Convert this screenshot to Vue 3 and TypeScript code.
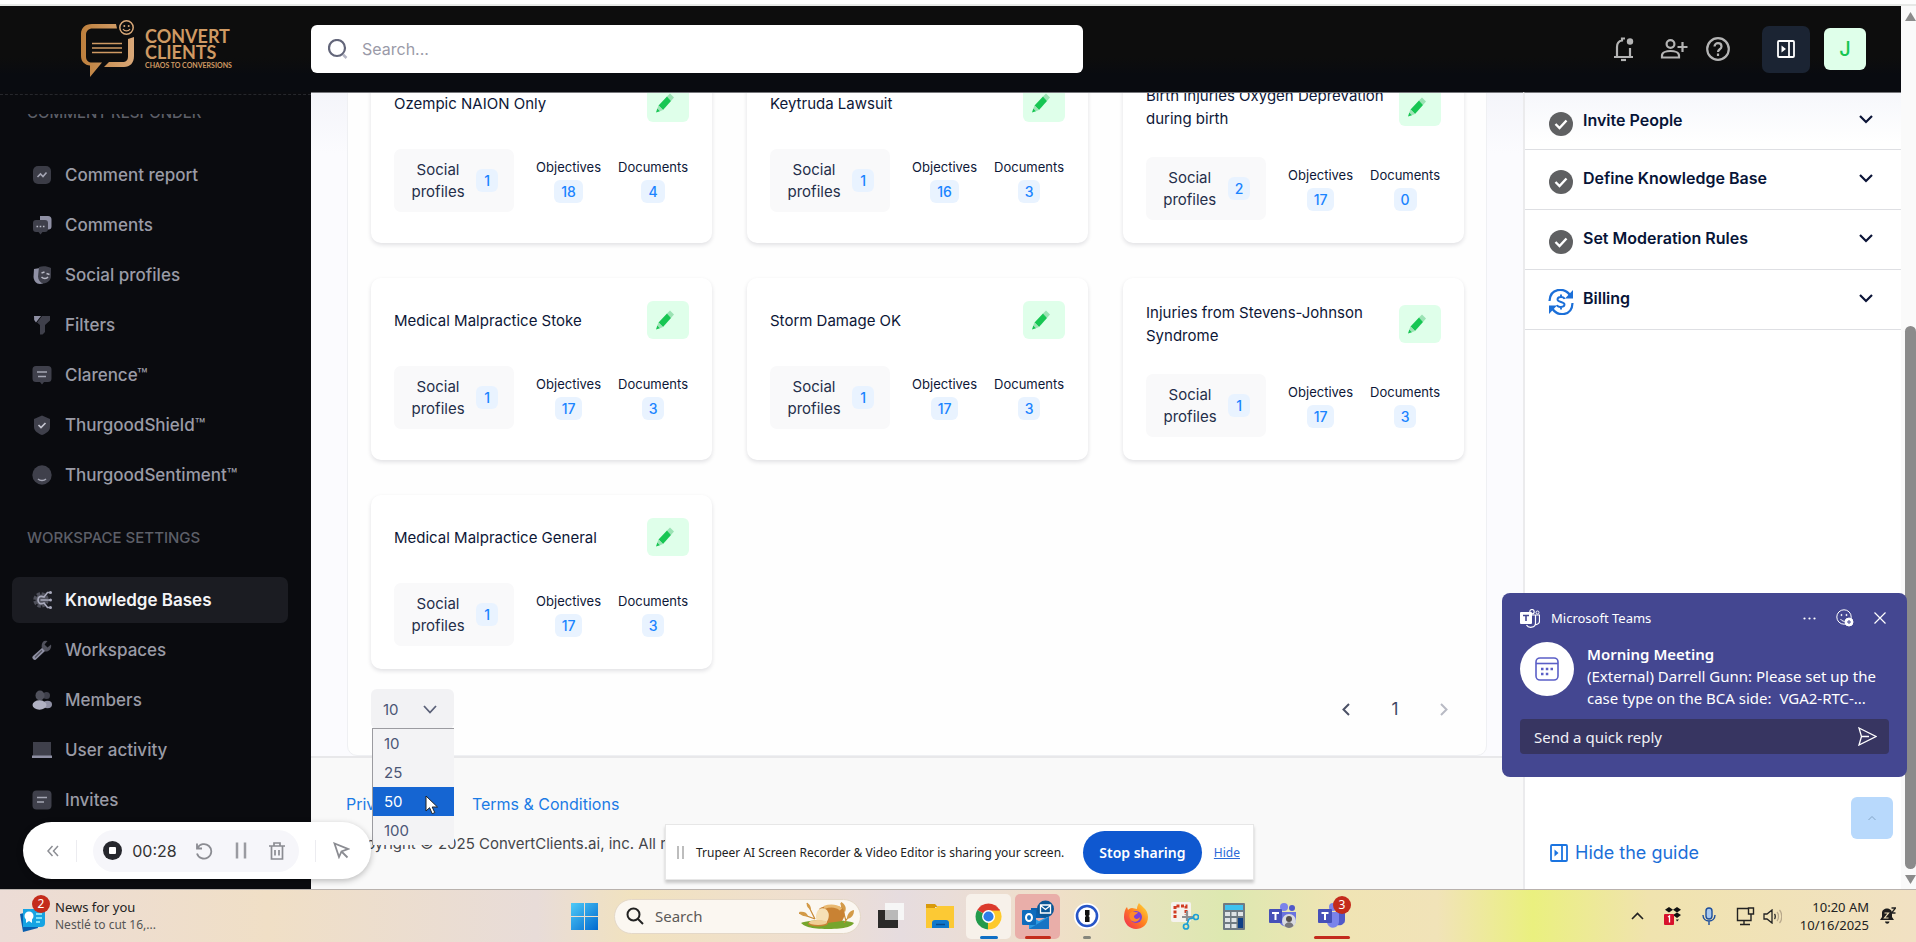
<script setup lang="ts">
import { ref } from 'vue'

interface NavItem { label: string; icon: string; active?: boolean }
interface KnowledgeBase { title: string; profiles: number; objectives: number; documents: number }

const responderItems: NavItem[] = [
  { label: 'Comment report', icon: 'report' },
  { label: 'Comments', icon: 'comments' },
  { label: 'Social profiles', icon: 'masks' },
  { label: 'Filters', icon: 'filter' },
  { label: 'Clarence™', icon: 'chat' },
  { label: 'ThurgoodShield™', icon: 'shield' },
  { label: 'ThurgoodSentiment™', icon: 'smile' },
]
const workspaceItems: NavItem[] = [
  { label: 'Knowledge Bases', icon: 'brain', active: true },
  { label: 'Workspaces', icon: 'wrench' },
  { label: 'Members', icon: 'members' },
  { label: 'User activity', icon: 'laptop' },
  { label: 'Invites', icon: 'note' },
]

const icons: Record<string, string> = {
  report: '<rect x="1" y="1" width="18" height="18" rx="5" fill="#3b3c46"/><path d="M5.5 12l3-3 2.500 2.500 3.500-4" fill="none" stroke="#a5a6b4" stroke-width="1.600"/>',
  comments: '<path d="M8 1h8a3.500 3.500 0 0 1 3.500 3.500v7a3 3 0 0 1-3 3H8z" fill="#8f90a4"/><path d="M4 5h9a3 3 0 0 1 3 3v6a3 3 0 0 1-3 3h-2.500l-2 2.500L6.500 17H4a3 3 0 0 1-3-3V8a3 3 0 0 1 3-3z" fill="#3f404b"/><path d="M4.500 11.500h1.600M7.700 11.500h1.600M10.900 11.500h1.600" stroke="#b9bac6" stroke-width="1.500"/>',
  masks: '<path d="M2 4l6-1 3 15.500-3 .5c-4 0-6-3-6.500-7z" fill="#8f90a4"/><path d="M7 2c4-1.500 8-1 12 1v8c0 4-3 7-8 7.500-3-1-5-4-5-7z" fill="#3f404b"/><path d="M9.500 8l3-1M14.500 8.500l3 1M9.500 12c2 2 5 2 6.500 0" stroke="#b9bac6" stroke-width="1.500" fill="none"/>',
  filter: '<path d="M2 1h7L4 7.500 2.200 5z" fill="#8f90a4"/><path d="M10 1h8v4.500L13 10v7l-2.500 2.500H8V10L5 7.500z" fill="#3f404b"/>',
  chat: '<path d="M4 1h12a3.500 3.500 0 0 1 3.500 3.500v9A3.500 3.500 0 0 1 16 17h-4l-2 2.500L8 17H4a3.500 3.500 0 0 1-3.500-3.500v-9A3.500 3.500 0 0 1 4 1z" fill="#3f404b"/><path d="M5 7h10M6 11.500h8" stroke="#a5a6b4" stroke-width="1.600"/>',
  shield: '<path d="M10 .5l8 3.500v8c0 4-4 6.500-8 8-4-1.500-8-4-8-8V4z" fill="#3f404b"/><path d="M6.500 10l2.500 2.500L13.500 8" stroke="#c3c4cf" stroke-width="1.700" fill="none"/>',
  smile: '<circle cx="10" cy="10" r="9.700" fill="#3f404b"/><path d="M6 14c2 2 6 2 8 0" stroke="#a5a6b4" stroke-width="1.500" fill="none"/>',
  brain: '<circle cx="9" cy="10" r="6" fill="none" stroke="#50515c" stroke-width="3.500" stroke-dasharray="3.200 1.500"/><circle cx="9" cy="10" r="5.500" fill="#50515c"/><path d="M18.500 2.500h-3L12 7c-4-1.500-6 0-6 3s2 4.500 6 3l3.500 4.500h3M8.500 10h10" stroke="#a8a9bb" stroke-width="1.700" fill="none"/><circle cx="18.500" cy="2.500" r="1.500" fill="#a8a9bb"/><circle cx="18.500" cy="10" r="1.500" fill="#a8a9bb"/><circle cx="18.500" cy="17.500" r="1.500" fill="#a8a9bb"/>',
  wrench: '<path d="M12 1a5.500 5.500 0 0 1 3.500 0L12.500 4.500l3 3L19 4.500c1 4-2 7.500-6 7L10 9c-1-4 0-6.500 2-8z" fill="#50515c"/><path d="M10 8l3 3-8.500 8a2.200 2.200 0 0 1-3.500-3z" fill="#8f90a4"/><path d="M3 17.500l7-7" stroke="#50515c" stroke-width="1.200"/>',
  members: '<circle cx="14.500" cy="5.500" r="3.500" fill="#3f404b"/><ellipse cx="8" cy="5.500" rx="4.500" ry="5" fill="#50515c"/><ellipse cx="15.500" cy="14.500" rx="4.500" ry="3.700" fill="#8f90a4"/><ellipse cx="7.500" cy="15" rx="7" ry="4.700" fill="#b0b1c2"/>',
  laptop: '<path d="M1 2h18v14H1z" fill="#3f404b"/><path d="M0 15.500h20V18H0z" fill="#8f90a4"/>',
  note: '<rect x=".500" y=".500" width="19" height="19" rx="4" fill="#3f404b"/><path d="M5 7.500h10M5 12h7" stroke="#a5a6b4" stroke-width="1.600"/>',
}

const bases: KnowledgeBase[] = [
  { title: 'Ozempic NAION Only', profiles: 1, objectives: 18, documents: 4 },
  { title: 'Keytruda Lawsuit', profiles: 1, objectives: 16, documents: 3 },
  { title: 'Birth Injuries Oxygen Deprevation during birth', profiles: 2, objectives: 17, documents: 0 },
  { title: 'Medical Malpractice Stoke', profiles: 1, objectives: 17, documents: 3 },
  { title: 'Storm Damage OK', profiles: 1, objectives: 17, documents: 3 },
  { title: 'Injuries from Stevens-Johnson Syndrome', profiles: 1, objectives: 17, documents: 3 },
  { title: 'Medical Malpractice General', profiles: 1, objectives: 17, documents: 3 },
]

const guideSteps = [
  { label: 'Invite People', done: true },
  { label: 'Define Knowledge Base', done: true },
  { label: 'Set Moderation Rules', done: true },
  { label: 'Billing', done: false },
]

const pageSizes = [10, 25, 50, 100]
const pageSize = ref(10)
const highlighted = ref(50)
const searchText = ref('')
const reply = ref('')
</script>

<template>
  <div class="desktop">
    <div class="top-strip"></div>
    <div class="window">
      <div class="page">
        <header class="topbar">
          <a class="logo" href="#" aria-label="Convert Clients">
            <svg width="56" height="60" viewBox="0 0 56 60" fill="none">
              <defs>
                <linearGradient id="gold" x1="0" x2="1"><stop offset="0" stop-color="#bd7f3c" /><stop offset="1" stop-color="#d9a878" /></linearGradient>
              </defs>
              <path d="M38 5H14C7 5 3 9 3 15v22c0 6 4 9 9 9.500V58l12-14.500H14c-3.500 0-6-2-6-6V16c0-4 2.500-6.500 6.500-6.500H39zM56 18v19c0 7-4 11-10 11H26l5-5h13c4.500 0 6-2 6-6V20z" fill="url(#gold)" />
              <path d="M14 24.500h30M14 29h30M14 33.500h30" stroke="#d09a63" stroke-width="1.500" />
              <circle cx="48.500" cy="8.500" r="6.700" stroke="#d9a878" stroke-width="1.500" />
              <circle cx="46.300" cy="7" r="1" fill="#d9a878" /><circle cx="50.700" cy="7" r="1" fill="#d9a878" />
              <path d="M45 10c1.500 2.500 5.500 2.500 7 0" stroke="#d9a878" stroke-width="1.300" />
            </svg>
            <span class="logo-text">
              <span class="logo-name">CONVERT</span>
              <span class="logo-name">CLIENTS</span>
              <span class="logo-tag">CHAOS TO CONVERSIONS</span>
            </span>
          </a>
          <label class="search">
            <svg width="20" height="20" viewBox="0 0 20 20" fill="none"><circle cx="9" cy="9" r="8" stroke="#63667a" stroke-width="2.200" /><path d="M15 15.500l3.500 3.500" stroke="#b5b6c4" stroke-width="2.500" /></svg>
            <input v-model="searchText" type="search" placeholder="Search..." aria-label="Search" />
          </label>
          <div class="actions">
            <button class="icon-btn" aria-label="Notifications">
              <svg width="22" height="26" viewBox="0 0 22 26" fill="none" stroke="#b4b4b4" stroke-width="2.200"><path d="M1 21h19M4 21V11c0-4 2-6 5-6.500V2.500h3M17 12v9" /><path d="M8 24h5" /><circle cx="17" cy="5.500" r="3.200" fill="#b4b4b4" stroke="none" /></svg>
            </button>
            <button class="icon-btn" aria-label="Add person">
              <svg width="28" height="22" viewBox="0 0 28 22" fill="none" stroke="#b4b4b4" stroke-width="2.200"><circle cx="10.500" cy="6" r="3.900" /><path d="M2 19.500v-2c0-6 17-6 17 0v2zM22.500 4v10M17.500 9h10" /></svg>
            </button>
            <button class="icon-btn" aria-label="Help">
              <svg width="26" height="26" viewBox="0 0 26 26" fill="none" stroke="#b4b4b4" stroke-width="2.200"><circle cx="13" cy="13" r="10.800" /><path d="M9.500 10.500c0-4.500 7-4.500 7 0 0 3-3.500 2.500-3.500 5.500M13 17.500v2.500" /></svg>
            </button>
            <button class="guide-toggle" aria-label="Toggle guide">
              <svg width="18" height="18" viewBox="0 0 18 18" fill="none" stroke="#fff" stroke-width="1.800"><rect x="1" y="1" width="16" height="16" rx="1" /><path d="M12 1v16" /><path d="M4.500 5.500L9 9l-4.500 3.500z" fill="#fff" stroke="none" /></svg>
            </button>
            <button class="avatar">J</button>
          </div>
        </header>

        <div class="body">
          <aside class="sidebar">
            <div class="divider"></div>
            <nav class="nav">
              <h2 class="nav-heading">COMMENT RESPONDER</h2>
              <a v-for="item in responderItems" :key="item.label" href="#" class="nav-item">
                <svg width="20" height="20" viewBox="0 0 20 20" v-html="icons[item.icon]"></svg>{{ item.label }}
              </a>
              <h2 class="nav-heading second">WORKSPACE SETTINGS</h2>
              <a v-for="item in workspaceItems" :key="item.label" href="#" class="nav-item" :class="{ active: item.active }">
                <svg width="20" height="20" viewBox="0 0 20 20" v-html="icons[item.icon]"></svg>{{ item.label }}
              </a>
            </nav>
          </aside>

          <main class="content">
            <section class="panel">
              <div class="grid">
                <article v-for="kb in bases" :key="kb.title" class="card">
                  <div class="card-head">
                    <h3>{{ kb.title }}</h3>
                    <button class="edit" :aria-label="'Edit ' + kb.title">
                      <svg width="20" height="20" viewBox="0 0 20 20"><path d="M12 3.500l3-3 4 4-3 3.500z" fill="#9be3b4" /><path d="M12 3.500l4 4.500-8 9-4.500-4.500z" fill="#17c653" /><path d="M3.500 12.500L8 17l-3 1.200L2.300 15.500z" fill="#9be3b4" /><path d="M2.300 15.500l2.700 2.700L1 19.500z" fill="#17c653" /></svg>
                    </button>
                  </div>
                  <div class="stats">
                    <div class="social"><span>Social profiles</span><b class="badge">{{ kb.profiles }}</b></div>
                    <div class="stat objectives"><span>Objectives</span><b class="badge">{{ kb.objectives }}</b></div>
                    <div class="stat"><span>Documents</span><b class="badge">{{ kb.documents }}</b></div>
                  </div>
                </article>
              </div>
              <div class="pager">
                <div class="size">
                  <select v-model="pageSize" aria-label="Rows per page">
                    <option v-for="n in pageSizes" :key="n" :value="n">{{ n }}</option>
                  </select>
                  <svg width="14" height="9" viewBox="0 0 14 9" fill="none" stroke="#5b6178" stroke-width="1.800"><path d="M1 1l6 6.500L13 1" /></svg>
                  <ul class="options" role="listbox" aria-label="Rows per page options">
                    <li v-for="n in pageSizes" :key="n" role="option" :class="{ on: n === highlighted }" @mouseenter="highlighted = n">{{ n }}</li>
                  </ul>
                  <svg class="cursor" width="14" height="20" viewBox="0 0 14 20"><path d="M1 1v15l3.600-3.300 2.600 6 2.600-1.100L7.200 12H12.500z" fill="#fff" stroke="#222" stroke-width="1" /></svg>
                </div>
                <div class="pages">
                  <button aria-label="Previous page"><svg width="8" height="13" viewBox="0 0 8 13" fill="none" stroke="#4b5166" stroke-width="2"><path d="M7 1L1.500 6.500 7 12" /></svg></button>
                  <button class="number">1</button>
                  <button aria-label="Next page" disabled><svg width="8" height="13" viewBox="0 0 8 13" fill="none" stroke="#b8bac4" stroke-width="2"><path d="M1 1l5.500 5.500L1 12" /></svg></button>
                </div>
              </div>
            </section>
            <footer class="footer">
              <div class="links"><a href="#">Privacy Policy</a><a href="#">Terms &amp; Conditions</a></div>
              <p>Copyright © 2025 ConvertClients.ai, inc. All rights reserved.</p>
            </footer>
          </main>

          <aside class="guide">
            <button v-for="step in guideSteps" :key="step.label" class="step">
              <svg v-if="step.done" width="24" height="24" viewBox="0 0 24 24"><circle cx="12" cy="12" r="12" fill="#5f6062" /><path d="M6.500 12l4 4 7-7.500" fill="none" stroke="#fff" stroke-width="2.400" /></svg>
              <svg v-else width="26" height="26" viewBox="0 0 26 26" fill="none" stroke="#1b6fd8" stroke-width="2.200"><path d="M1.500 12C2 -1 16-2 22 6M24.500 14c-.5 13-14 14-20 6" /><path d="M25 1v8.500h-8zM1 25v-8.500h8z" fill="#1b6fd8" stroke="none" /><path d="M16.500 10c-1-3-7-2.500-7 .5s7 2 7 5-6.500 3.500-7.500.5M13 5.500v2.500M13 18v2.500" stroke-width="1.900" /></svg>
              <span>{{ step.label }}</span>
              <svg width="14" height="9" viewBox="0 0 14 9" fill="none" stroke="#0b1437" stroke-width="2.200"><path d="M1 1l6 6 6-6" /></svg>
            </button>
            <button class="to-top" aria-label="Scroll to top"><svg width="8" height="7" viewBox="0 0 8 7" fill="none" stroke="#84a5c6"><path d="M0.500 5L4 1.500 7.500 5" /></svg></button>
            <a class="hide-guide" href="#">
              <svg width="18" height="18" viewBox="0 0 18 18" fill="none" stroke="#1b74e0" stroke-width="1.800"><rect x="1" y="1" width="16" height="16" rx="1" /><path d="M12 1v16" /><path d="M4.500 5.500L8.500 9l-4 3.500z" fill="#1b74e0" stroke="none" /></svg>
              Hide the guide
            </a>
          </aside>
        </div>
      </div>
      <div class="scrollbar">
        <svg width="11" height="9" viewBox="0 0 11 9"><path d="M5.500 0L11 9H0z" fill="#8b8b8b" /></svg>
        <div class="track"><div class="thumb"></div></div>
        <svg width="11" height="9" viewBox="0 0 11 9"><path d="M0 0h11L5.500 9z" fill="#8b8b8b" /></svg>
      </div>
    </div>

    <div class="recorder">
      <button aria-label="Collapse"><svg width="12" height="12" viewBox="0 0 12 12" fill="none" stroke="#8c8e94" stroke-width="1.500"><path d="M5.500 1L1 6l4.500 5M11 1L6.500 6l4.500 5" /></svg></button>
      <i class="bar"></i>
      <div class="controls">
        <button aria-label="Stop"><svg width="19" height="19" viewBox="0 0 19 19"><circle cx="9.500" cy="9.500" r="9.500" fill="#26272d" /><rect x="6" y="6" width="7" height="7" rx="1" fill="#fff" /></svg></button>
        <span class="time">00:28</span>
        <button aria-label="Restart"><svg width="18" height="18" viewBox="0 0 18 18" fill="none" stroke="#8b8c92" stroke-width="1.800"><path d="M2 1.500v5h5M2.500 6a7.300 7.300 0 1 1-.5 5.500" /></svg></button>
        <button aria-label="Pause"><svg width="12" height="17" viewBox="0 0 12 17" stroke="#9a9ba1" stroke-width="2.500"><path d="M2 .500v16M10 .500v16" /></svg></button>
        <button aria-label="Delete"><svg width="16" height="18" viewBox="0 0 16 18" fill="none" stroke="#8b8c92" stroke-width="1.700"><path d="M0 4h16M5 3.500V1h6v2.500M2.500 4v13h11V4M6 8v5.500M10 8v5.500" /></svg></button>
      </div>
      <i class="bar"></i>
      <button aria-label="Pointer"><svg width="17" height="17" viewBox="0 0 17 17" fill="none" stroke="#8b8c92" stroke-width="1.800"><path d="M1.500 1.500L6 15l2.500-5.500L15 7zM9 10l5.500 5.500" /></svg></button>
    </div>

    <div class="sharing">
      <svg width="8" height="13" viewBox="0 0 8 13" stroke="#bdbdbd" stroke-width="2"><path d="M1 0v13M6 0v13" /></svg>
      <span>Trupeer AI Screen Recorder &amp; Video Editor is sharing your screen.</span>
      <button>Stop sharing</button>
      <a href="#">Hide</a>
    </div>

    <section class="toast">
      <header>
        <svg width="20" height="19" viewBox="0 0 20 19"><path d="M11 6h8.500v6a3.500 3.500 0 0 1-4 3.500M15.500 6v8c0 5-7 5.500-9 2" fill="none" stroke="#fff" stroke-width="1.200" /><circle cx="12" cy="2.700" r="2.200" fill="none" stroke="#fff" stroke-width="1.200" /><circle cx="17.500" cy="3.500" r="1.500" fill="none" stroke="#fff" /><rect y="3" width="12" height="12" rx="1" fill="#fff" /><path d="M3 6.500h6M6 6.500V12" stroke="#444791" stroke-width="1.600" /></svg>
        <span class="app-name">Microsoft Teams</span>
        <button aria-label="More"><svg width="13" height="3" viewBox="0 0 13 3" fill="#fff"><circle cx="1.500" cy="1.500" r="1.100" /><circle cx="6.500" cy="1.500" r="1.100" /><circle cx="11.500" cy="1.500" r="1.100" /></svg></button>
        <button aria-label="React"><svg width="18" height="18" viewBox="0 0 18 18" fill="none" stroke="#fff"><circle cx="8" cy="8" r="7.200" /><circle cx="5.500" cy="6" r=".6" fill="#fff" /><circle cx="10.500" cy="6" r=".6" fill="#fff" /><path d="M4.500 10c1.500 2.500 4 2.500 5 2" /><circle cx="13" cy="13" r="4" fill="#fff" /><path d="M13 11v4M11 13h4" stroke="#444791" /></svg></button>
        <button aria-label="Close"><svg width="12" height="12" viewBox="0 0 12 12" stroke="#fff" stroke-width="1.200"><path d="M.500.500l11 11M11.500.500l-11 11" /></svg></button>
      </header>
      <div class="toast-body">
        <div class="toast-icon"><svg width="24" height="24" viewBox="0 0 24 24" fill="none" stroke="#5b5fc7" stroke-width="1.600"><rect x="1" y="1" width="22" height="22" rx="4" /><path d="M1 6.500h22" /><path d="M6 12h2.500M10.800 12h2.500M15.500 12H18M6 17h2.500M10.800 17h2.500" stroke-width="2.600" /></svg></div>
        <div class="toast-text">
          <strong>Morning Meeting</strong>
          <p>(External) Darrell Gunn: Please set up the<br />case type on the BCA side:&nbsp; VGA2-RTC-...</p>
        </div>
      </div>
      <div class="reply">
        <input v-model="reply" type="text" placeholder="Send a quick reply" aria-label="Send a quick reply" />
        <button aria-label="Send"><svg width="19" height="19" viewBox="0 0 19 19" fill="none" stroke="#fff" stroke-width="1.300"><path d="M1 1l17 8.500L1 18l2.500-8.500zM3.500 9.500H11" /></svg></button>
      </div>
    </section>

    <div class="taskbar">
      <div class="tb-left">
        <button class="news">
          <span class="news-icon">
            <svg width="26" height="26" viewBox="0 0 26 26"><path d="M0 8l15-4 3 18-15 4z" fill="#0a5fae" /><path d="M3 3h22v14a4 4 0 0 1-4 4H3z" fill="#17a4e3" /><circle cx="9" cy="10" r="4.500" fill="#fff" /><path d="M6 10h6v7l-3-2-3 2z" fill="#fff" /><path d="M16 8h6M16 12h6M16 16h4" stroke="#7fe0f7" stroke-width="1.800" /></svg>
            <b class="count">2</b>
          </span>
          <span class="news-text"><span>News for you</span><small>Nestlé to cut 16,...</small></span>
        </button>
      </div>
      <div class="tb-center">
        <button class="app" aria-label="Start">
          <svg width="27" height="27" viewBox="0 0 27 27"><defs><linearGradient id="win" x1="0" y1="0" x2="1" y2="1"><stop offset="0" stop-color="#4ecbf8" /><stop offset="1" stop-color="#0269cf" /></linearGradient></defs><path d="M0 0h13v13H0zM14 0h13v13H14zM0 14h13v13H0zM14 14h13v13H14z" fill="url(#win)" /></svg>
        </button>
        <label class="tb-search">
          <svg width="18" height="18" viewBox="0 0 18 18" fill="none" stroke="#222" stroke-width="2"><circle cx="7.500" cy="7.500" r="6" /><path d="M12 12l5 5" /></svg>
          <input type="search" placeholder="Search" aria-label="Search the computer" />
          <svg width="56" height="28" viewBox="0 0 56 28"><path d="M2 21c8-4 46-4 53 0-2 3-8 6-26 6S5 24 2 21z" fill="#76a52c" /><path d="M8 1l8 16M0 11l16 6M42 1l5 18M54 9l-9 12" stroke="#c88a35" stroke-width="1.200" fill="none" /><path d="M8 1c3 1 4 4 4 7-3-2-5-4-4-7zM0 10c4-1 8 0 9 4-4 1-7 0-9-4zM42 0c4 2 6 6 4 10-3-2-5-6-4-10zM55 8c0 5-2 8-7 9 0-4 2-8 7-9z" fill="#d39a48" /><path d="M20 7C24 3 40 2 44 7c3 4 1 9-1 12l-22 3z" fill="#c98233" /><path d="M25 5.500c7-2.500 14-1.500 17 2" stroke="#e9b972" stroke-width="3" fill="none" /><path d="M18 10c2-5 9-5 11 0 2 3 0 9-2 11l-8 1c-2-4-3-8-1-12z" fill="#f6e0b6" /><ellipse cx="19" cy="21.500" rx="10" ry="3" fill="#c98233" /><ellipse cx="19" cy="20.500" rx="9" ry="2.400" fill="#f1cf96" /></svg>
        </label>
        <button class="app" aria-label="Task view"><svg width="28" height="28" viewBox="0 0 28 28"><rect x="1" y="8" width="20" height="18" fill="#2b2a29" /><rect x="8" y="1" width="19" height="17" fill="#f6f6f6" /><rect x="8" y="8" width="13" height="10" fill="#b9b9b9" /></svg></button>
        <button class="app" aria-label="Files"><svg width="28" height="26" viewBox="0 0 28 26"><path d="M0 1h9l3 3h-3v6H0z" fill="#d99a0b" /><path d="M0 5h10l2-2h16v22H0z" fill="#fcc934" /><path d="M6 25v-5a3 3 0 0 1 3-3h11a3 3 0 0 1 3 3v5z" fill="#1078cb" /><path d="M10 21.500h9" stroke="#0a4c8c" stroke-width="1.500" /></svg></button>
        <button class="app chrome" aria-label="Chrome"><svg width="27" height="27" viewBox="0 0 48 48"><circle cx="24" cy="24" r="23" fill="#fff" /><path d="M24 24L4 12.500A23 23 0 0 1 44 12.500z" fill="#db3a2c" /><path d="M24 24L4 12.500A23 23 0 0 0 23 47z" fill="#229a4b" /><path d="M24 24h-1v23a23 23 0 0 0 21-34.500H24z" fill="#fdc92b" /><path d="M24 12.500h20" stroke="#db3a2c" stroke-width="2" /><circle cx="24" cy="24" r="11.500" fill="#fff" /><circle cx="24" cy="24" r="9" fill="#2d7de8" /></svg><i class="run blue"></i></button>
        <button class="app outlook" aria-label="Outlook"><svg width="32" height="32" viewBox="0 0 32 32"><path d="M9 8h15v10H9z" fill="#0b5fad" /><path d="M7 16l10 5 10-5v13H7z" fill="#2b9ae3" /><path d="M7 29l20-12v12z" fill="#1674c4" /><rect y="10" width="14" height="15" rx="1" fill="#0f6cbd" /><ellipse cx="7" cy="17.500" rx="3" ry="3.500" fill="none" stroke="#fff" stroke-width="2" /><circle cx="23.500" cy="9" r="8.500" fill="#0c5796" /><path d="M18.500 5h10v8h-10zM18.500 5.500l5 4 5-4" fill="none" stroke="#fff" stroke-width="1.300" /></svg><i class="run red"></i></button>
        <button class="app" aria-label="1Password"><svg width="26" height="26" viewBox="0 0 26 26"><circle cx="13" cy="13" r="13" fill="#fff" /><circle cx="13" cy="13" r="10" fill="none" stroke="#2655c7" stroke-width="2.600" /><path d="M11 7h4.500v5l-1 1 1 1v5H11v-5l1-1-1-1z" fill="#111" /></svg><i class="run dot"></i></button>
        <button class="app" aria-label="Firefox"><svg width="26" height="26" viewBox="0 0 26 26"><defs><linearGradient id="fox" x1="1" y1="0" x2="0" y2="1"><stop offset="0" stop-color="#ffe13a" /><stop offset=".5" stop-color="#ff7d1f" /><stop offset="1" stop-color="#f0245a" /></linearGradient></defs><path d="M16 0c2 3 9 6 9 14S19 26 13 26 1 21 1 14c0-4 1-8 3-10l1 3c1-1 2-2 4-2l5 1c0-3 1-4 2-6z" fill="url(#fox)" /><circle cx="13" cy="14" r="6" fill="#7b3fd8" /><path d="M7 10c3-3 5 0 8-1-1 3-4 2-4 5 1 3 5 2 6 0 0 4-5 6-8 4s-3-6-2-8z" fill="#ff8a2a" /></svg></button>
        <button class="app" aria-label="Snipping tool"><svg width="28" height="28" viewBox="0 0 28 28" fill="none"><rect width="20" height="20" rx="2" fill="#f5f2ee" /><path d="M4 16V4h11v9" stroke="#d13b22" stroke-width="3" stroke-dasharray="3 1.500" /><path d="M16 9v10M11 15h11" stroke="#8d8f92" stroke-width="2.200" /><circle cx="25" cy="15" r="2.500" stroke="#1b9fd6" stroke-width="1.700" /><circle cx="15" cy="24.500" r="2.500" stroke="#1b9fd6" stroke-width="1.700" /><path d="M16 22l2-5 4-1" stroke="#1b9fd6" stroke-width="1.700" /></svg></button>
        <button class="app" aria-label="Calculator"><svg width="22" height="27" viewBox="0 0 22 27"><rect width="22" height="27" rx="1" fill="#6f7a82" /><rect x="2" y="2" width="18" height="5" fill="#3ec3f0" /><path d="M2 9h5v4H2zM8.500 9h5v4h-5zM15 9h5v4h-5zM2 15h5v4H2zM8.500 15h5v4h-5zM2 21h5v4H2zM8.500 21h5v4h-5z" fill="#dfe3e6" /><path d="M15 15h5v10h-5z" fill="#0e3f86" /></svg></button>
        <button class="app" aria-label="Teams chat"><svg width="28" height="26" viewBox="0 0 28 26"><circle cx="15" cy="4" r="4" fill="#7b83eb" /><circle cx="23" cy="5" r="3" fill="#5059c9" /><path d="M10 9h17v8c0 9-17 9-17 0z" fill="#6a73de" /><rect y="6" width="13" height="14" rx="1" fill="#4650b8" /><path d="M3 10h7M6.500 10v7" stroke="#fff" stroke-width="2" /><circle cx="20" cy="18" r="7" fill="#d9dbe0" /><circle cx="20" cy="16" r="3" fill="#55504d" /><path d="M15.500 23c1-5 8-5 9 0-3 2.500-6 2.500-9 0z" fill="#77777c" /></svg></button>
        <button class="app" aria-label="Teams"><svg width="28" height="26" viewBox="0 0 28 26"><circle cx="15" cy="4" r="4" fill="#7b83eb" /><path d="M18 9h9v8c0 4-4 6-8 5z" fill="#5059c9" /><path d="M9 9h12v9c0 8-10 9-12 2z" fill="#7b83eb" /><rect y="6" width="14" height="14" rx="1" fill="#4650b8" /><path d="M3.500 10h7M7 10v7" stroke="#fff" stroke-width="2" /></svg><b class="count">3</b><i class="run red wide"></i></button>
      </div>
      <div class="tb-right">
        <button aria-label="Show hidden icons"><svg width="13" height="8" viewBox="0 0 13 8" fill="none" stroke="#222" stroke-width="1.600"><path d="M1 7l5.500-5.500L12 7" /></svg></button>
        <button aria-label="Dropbox"><svg width="18" height="18" viewBox="0 0 18 18"><path d="M5 0l4 2.700L5 5.500 1 2.700zM13 0l4 2.700-4 2.800-4-2.800zM13 5.500L17 8l-4 3-4-3zM12 12.500h3l-2 2z" fill="#111" /><rect y="7" width="10" height="11" rx="1" fill="#d8122c" /><path d="M4 10l1.500-1v6.500" stroke="#fff" stroke-width="1.300" fill="none" /></svg></button>
        <button aria-label="Microphone"><svg width="14" height="18" viewBox="0 0 14 18" fill="none" stroke="#1d4e9c" stroke-width="1.400"><rect x="4" y="1" width="6" height="11" rx="3" fill="#a9c9ee" /><path d="M1 8c0 8 12 8 12 0M7 14v4" /></svg></button>
        <span class="net">
          <svg width="19" height="19" viewBox="0 0 19 19" fill="none" stroke="#222" stroke-width="1.400"><path d="M12 1.500H1.500v12H15V9M4 17.500h10M8 14v3M12.500 1h5v6h-5zM15 7v3" /></svg>
          <svg width="19" height="15" viewBox="0 0 19 15" fill="none" stroke="#222" stroke-width="1.300"><path d="M1 5h3l5-4v13l-5-4H1zM11.500 5c1 1 1 4 0 5" /><path d="M14 3c2 2 2 7 0 9M16.500 1c3 3 3 10 0 13" stroke="#b9a98c" /></svg>
        </span>
        <div class="clock"><span>10:20 AM</span><span>10/16/2025</span></div>
        <svg width="17" height="18" viewBox="0 0 17 18"><path d="M1 13l2-3V6c0-6 10-6 10 0v4l2 3zM6 14.500h4.500c-.5 3-4 3-4.500 0z" fill="#1d1d1d" /><path d="M5.500 6h4l-4 5h4" stroke="#f0e0bc" stroke-width="1.200" fill="none" /><path d="M12.500 1h4l-4 5h4" stroke="#222" stroke-width="1.300" fill="none" /></svg>
      </div>
    </div>
  </div>
</template>

<style>
html, body { margin: 0; height: 100%; }
#app { height: 100%; }
</style>

<style scoped>
* { box-sizing: border-box; }
.desktop { position: relative; display: flex; flex-direction: column; height: 100vh; overflow: hidden; font-family: Inter, "Liberation Sans", sans-serif; font-size: 16px; color: #0d1737; background: #fff; }
button { font: inherit; color: inherit; background: none; border: 0; padding: 0; display: flex; align-items: center; justify-content: center; }
input, select { font: inherit; color: inherit; border: 0; background: none; outline: none; padding: 0; min-width: 0; appearance: none; }
a { text-decoration: none; }
h2, h3, p, ul { margin: 0; padding: 0; font-weight: 400; list-style: none; }
svg { flex: none; display: block; }

.top-strip { flex: none; height: 6px; background: #fdfdfd; border-bottom: 2px solid #e6e8e6; }
.window { flex: 1; min-height: 0; display: flex; }
.page { flex: 1; min-width: 0; display: flex; flex-direction: column; }
.topbar { flex: none; height: 86px; display: flex; align-items: center; background: linear-gradient(#0d0d0d 60%, #090b10 80%); }
.logo { width: 311px; padding-left: 78px; display: flex; gap: 11px; align-items: center; }
.logo-text { display: flex; flex-direction: column; font-family: Lato, sans-serif; color: #cf9a63; }
.logo-name { font-size: 18px; line-height: 16px; font-weight: 700; }
.logo-tag { font-size: 7px; line-height: 10px; font-weight: 700; white-space: nowrap; }
.search { width: 772px; height: 48px; border-radius: 6px; background: #fff; display: flex; align-items: center; gap: 14px; padding: 0 17px; }
.search input { flex: 1; color: #333; }
.search input::placeholder { color: #9a9aa8; opacity: 1; }
.actions { margin-left: auto; display: flex; align-items: center; padding-right: 35px; }
.icon-btn { width: 44px; height: 40px; }
.icon-btn:first-child { width: 57px; }
.guide-toggle { width: 48px; height: 47px; margin-left: 22px; background: #1b2433; border-radius: 7px; }
.avatar { width: 42px; height: 42px; margin-left: 14px; background: #dfffea; border-radius: 6px; color: #17c653; font-size: 20px; font-weight: 500; }

.body { flex: 1; min-height: 0; display: flex; position: relative; }
.sidebar { flex: none; width: 311px; background: #0a0b0f; display: flex; flex-direction: column; padding-top: 2px; }
.divider { flex: none; height: 20px; border-top: 1px dashed #26272c; }
.nav { flex: 1; min-height: 0; overflow: hidden; display: flex; flex-direction: column; justify-content: flex-end; padding: 0 23px 64px 12px; }
.nav-heading { flex: none; height: 26px; line-height: 26px; padding-left: 15px; margin-bottom: 24px; font-size: 15px; font-weight: 500; color: #5d5f68; }
.nav-heading.second { margin-top: 25px; }
.nav-item { flex: none; height: 46px; margin: 2px 0; display: flex; align-items: center; gap: 13px; padding-left: 20px; border-radius: 7px; color: #9a9ba6; font-size: 17px; font-weight: 500; white-space: nowrap; }
.nav-item.active { background: #1b1c22; color: #f5f5f7; font-weight: 600; }

.content { flex: 1; min-width: 0; overflow: hidden; display: flex; flex-direction: column; justify-content: flex-end; background: linear-gradient(#f4f5fa, #fbfbfe 60px); border-top: 1px solid #77787c; }
.panel { flex: none; margin: 0 36px; background: #fefefe; border: 1px solid #eff0f3; border-radius: 10px; padding: 22px 22px 26px 23px; }
.grid { display: grid; grid-template-columns: repeat(3, 1fr); gap: 35px; }
.card { display: flex; flex-direction: column; gap: 27px; background: #fff; border-radius: 10px; padding: 23px; box-shadow: 0 2px 4px rgba(20, 25, 50, .13); }
.card-head { display: flex; align-items: center; justify-content: space-between; }
.card-head h3 { font-size: 15px; line-height: 23px; }
.edit { flex: none; width: 42px; height: 38px; background: #dfffea; border-radius: 6px; padding-right: 6px; }
.stats { display: flex; align-items: center; }
.social { flex: 1; height: 63px; display: flex; align-items: center; justify-content: center; gap: 10px; border-radius: 7px; background: #f9f9fa; color: #252f4a; line-height: 22px; text-align: center; }
.social span { width: 56px; font-size: 15px; }
.stat { display: flex; flex-direction: column; align-items: center; gap: 3px; font-size: 13px; line-height: 19px; margin: 0 1px 0 17px; }
.objectives { margin-left: 22px; margin-right: 0; }
.badge { min-width: 22px; height: 23px; line-height: 23px; padding: 0 7px; border-radius: 6px; background: #e9f3ff; color: #1b84ff; font-size: 14px; font-weight: 500; text-align: center; }

.pager { display: flex; align-items: center; justify-content: space-between; margin-top: 20px; height: 40px; }
.size { position: relative; width: 83px; height: 40px; display: flex; align-items: center; background: #f2f2f4; border-radius: 6px; color: #4b5675; font-size: 15px; }
.size select { width: 52px; height: 100%; padding-left: 12px; }
.options { position: absolute; z-index: 2; left: 1px; right: 0; top: 39px; height: 117px; background: #f3f3f5; border-top: 1px solid #9b9ba0; border-left: 1px solid #9b9ba0; }
.options li { height: 29px; line-height: 29px; padding-left: 11px; }
.options .on { background: #1565d2; color: #fff; }
.cursor { position: absolute; z-index: 3; left: 54px; top: 106px; }
.pages { display: flex; align-items: center; padding-right: 16px; }
.pages button { width: 8px; height: 30px; }
.pages .number { width: 90px; color: #3d4664; font-size: 17px; }
.footer { flex: none; height: 133px; background: #f9f9f9; border-top: 2px solid #e8e8ea; padding: 34px 34px 0 35px; color: #45464b; }
.links { display: flex; gap: 20px; line-height: 24px; margin-bottom: 16px; }
.links a { color: #1b7be5; }
.footer p { line-height: 24px; font-size: 15px; white-space: nowrap; }

.guide { flex: none; width: 378px; background: linear-gradient(#f6f7fb, #fff 50px); border-left: 2px solid #ebebed; border-top: 1px solid #77787c; display: flex; flex-direction: column; }
.step { height: 60px; flex: none; border-bottom: 1px solid #dedfe3; padding: 5px 28px 0 23px; gap: 9px; justify-content: flex-start; font-weight: 600; color: #071437; }
.step:first-child { height: 57px; }
.step span { flex: 1; text-align: left; line-height: 22px; padding-bottom: 8px; }
.step > svg:first-child { width: 26px; }
.step > svg:last-child { margin-bottom: 8px; }
.to-top { width: 42px; height: 42px; margin: auto 8px 0 auto; background: #b8d9fc; border-radius: 6px; }
.hide-guide { display: flex; align-items: center; gap: 7px; margin: 2px 0 24px 25px; line-height: 24px; color: #1b6fd8; font-size: 18px; }

.scrollbar { flex: none; width: 15px; background: #fafafa; display: flex; flex-direction: column; align-items: flex-end; padding: 6px 0 5px; }
.track { flex: 1; align-self: stretch; display: flex; flex-direction: column; justify-content: flex-end; padding: 0 0 6px 4px; }
.thumb { height: 64%; border-radius: 6px; background: #8b8b8b; }

.recorder { position: absolute; z-index: 5; left: 23px; bottom: 63px; height: 57px; width: 348px; border-radius: 29px; background: #fff; display: flex; align-items: center; justify-content: space-between; padding: 0 21px 0 24px; box-shadow: 0 2px 6px rgba(0, 0, 0, .25); }
.bar { width: 1px; height: 22px; background: #ececf0; }
.controls { display: flex; align-items: center; gap: 22px; height: 42px; padding: 0 14px 0 10px; border-radius: 21px; background: #f6f6fa; }
.time { color: #333; font-size: 16px; margin: 0 -4px 0 -12px; }
.sharing { position: absolute; z-index: 5; left: 665px; bottom: 62px; width: 589px; height: 56px; background: #fff; border: 1px solid #e7e7e7; box-shadow: 0 3px 3px rgba(0, 0, 0, .2); display: flex; align-items: center; padding: 0 13px 0 11px; font-family: "Noto Sans", sans-serif; font-size: 12px; color: #222; white-space: nowrap; }
.sharing span { margin-left: 11px; flex: 1; }
.sharing button { width: 119px; height: 43px; border-radius: 22px; background: #0f58d0; color: #fff; font-size: 14px; font-weight: 600; }
.sharing a { color: #2c6bd8; text-decoration: underline; margin-left: 12px; }

.toast { position: absolute; z-index: 6; right: 9px; bottom: 165px; width: 405px; height: 184px; border-radius: 8px; background: #444791; color: #fff; padding: 14px 18px; font-family: "Noto Sans", sans-serif; }
.toast header { display: flex; align-items: center; height: 22px; padding-right: 3px; }
.toast .app-name { flex: 1; margin-left: 11px; font-size: 13px; }
.toast header button { margin-left: 20px; }
.toast-body { display: flex; gap: 13px; margin-top: 13px; }
.toast-icon { flex: none; width: 54px; height: 54px; border-radius: 50%; background: #fff; display: flex; align-items: center; justify-content: center; }
.toast-text { font-size: 15px; line-height: 22px; white-space: nowrap; padding-top: 1px; }
.toast-text strong { font-weight: 600; display: block; }
.reply { display: flex; align-items: center; height: 35px; margin-top: 10px; background: #373561; border-radius: 4px; padding: 0 12px 0 14px; font-size: 15px; }
.reply input { flex: 1; color: #fff; }
.reply input::placeholder { color: #f1f1f6; opacity: 1; }

.taskbar { position: relative; z-index: 4; flex: none; height: 53px; border-top: 1px solid #b9b2ad; display: grid; grid-template-columns: 1fr auto 1fr; align-items: center; background: linear-gradient(90deg, #ecdcd6 0, #f0dfc6 14%, #e8dcd8 28%, #f1e2bf 33%, #efdfd0 42%, #e6dcdf 47%, #f0dfc9 55%, #dde8b0 64%, #f0e4b4 70%, #f1e3b8 75%, #eaf07f 80%, #f0e3ae 86%, #f1e1c3 100%); font-family: "Noto Sans", sans-serif; color: #222; }
.news { margin-left: 20px; gap: 9px; }
.news-icon { position: relative; padding-top: 6px; }
.news-text { display: flex; flex-direction: column; align-items: flex-start; font-size: 13px; line-height: 18px; }
.news-text small { font-size: 12px; color: #555; }
.count { position: absolute; width: 18px; height: 18px; border-radius: 50%; background: #c42b1c; color: #fff; font-size: 12px; line-height: 18px; font-weight: 400; text-align: center; }
.news-icon .count { right: -4px; top: -5px; }
.tb-center { display: flex; align-items: center; gap: 4px; }
.app { position: relative; width: 45px; height: 45px; border-radius: 5px; }
.chrome { background: #f7f1ea; }
.outlook { background: #e9aea9; }
.app .count { right: 3px; top: 2px; }
.run { position: absolute; bottom: 0; width: 18px; height: 3px; border-radius: 2px; }
.run.blue { background: #0f6fc5; }
.run.red { background: #c42b1c; width: 26px; }
.run.wide { width: 36px; }
.run.dot { width: 8px; background: #85867c; }
.tb-search { width: 247px; height: 35px; margin: 0 3px; border-radius: 18px; border: 1px solid #e4d8c8; background: #fbf7f1; display: flex; align-items: center; gap: 11px; padding: 0 5px 0 11px; font-size: 15px; }
.tb-search input { flex: 1; }
.tb-search input::placeholder { color: #5b5a58; opacity: 1; }
.tb-right { display: flex; align-items: center; justify-content: flex-end; gap: 20px; padding-right: 20px; font-size: 13px; }
.net { display: flex; align-items: center; gap: 8px; }
.clock { display: flex; flex-direction: column; align-items: flex-end; line-height: 18px; margin-left: -2px; }
.tb-right > svg { margin-left: -10px; }
</style>
